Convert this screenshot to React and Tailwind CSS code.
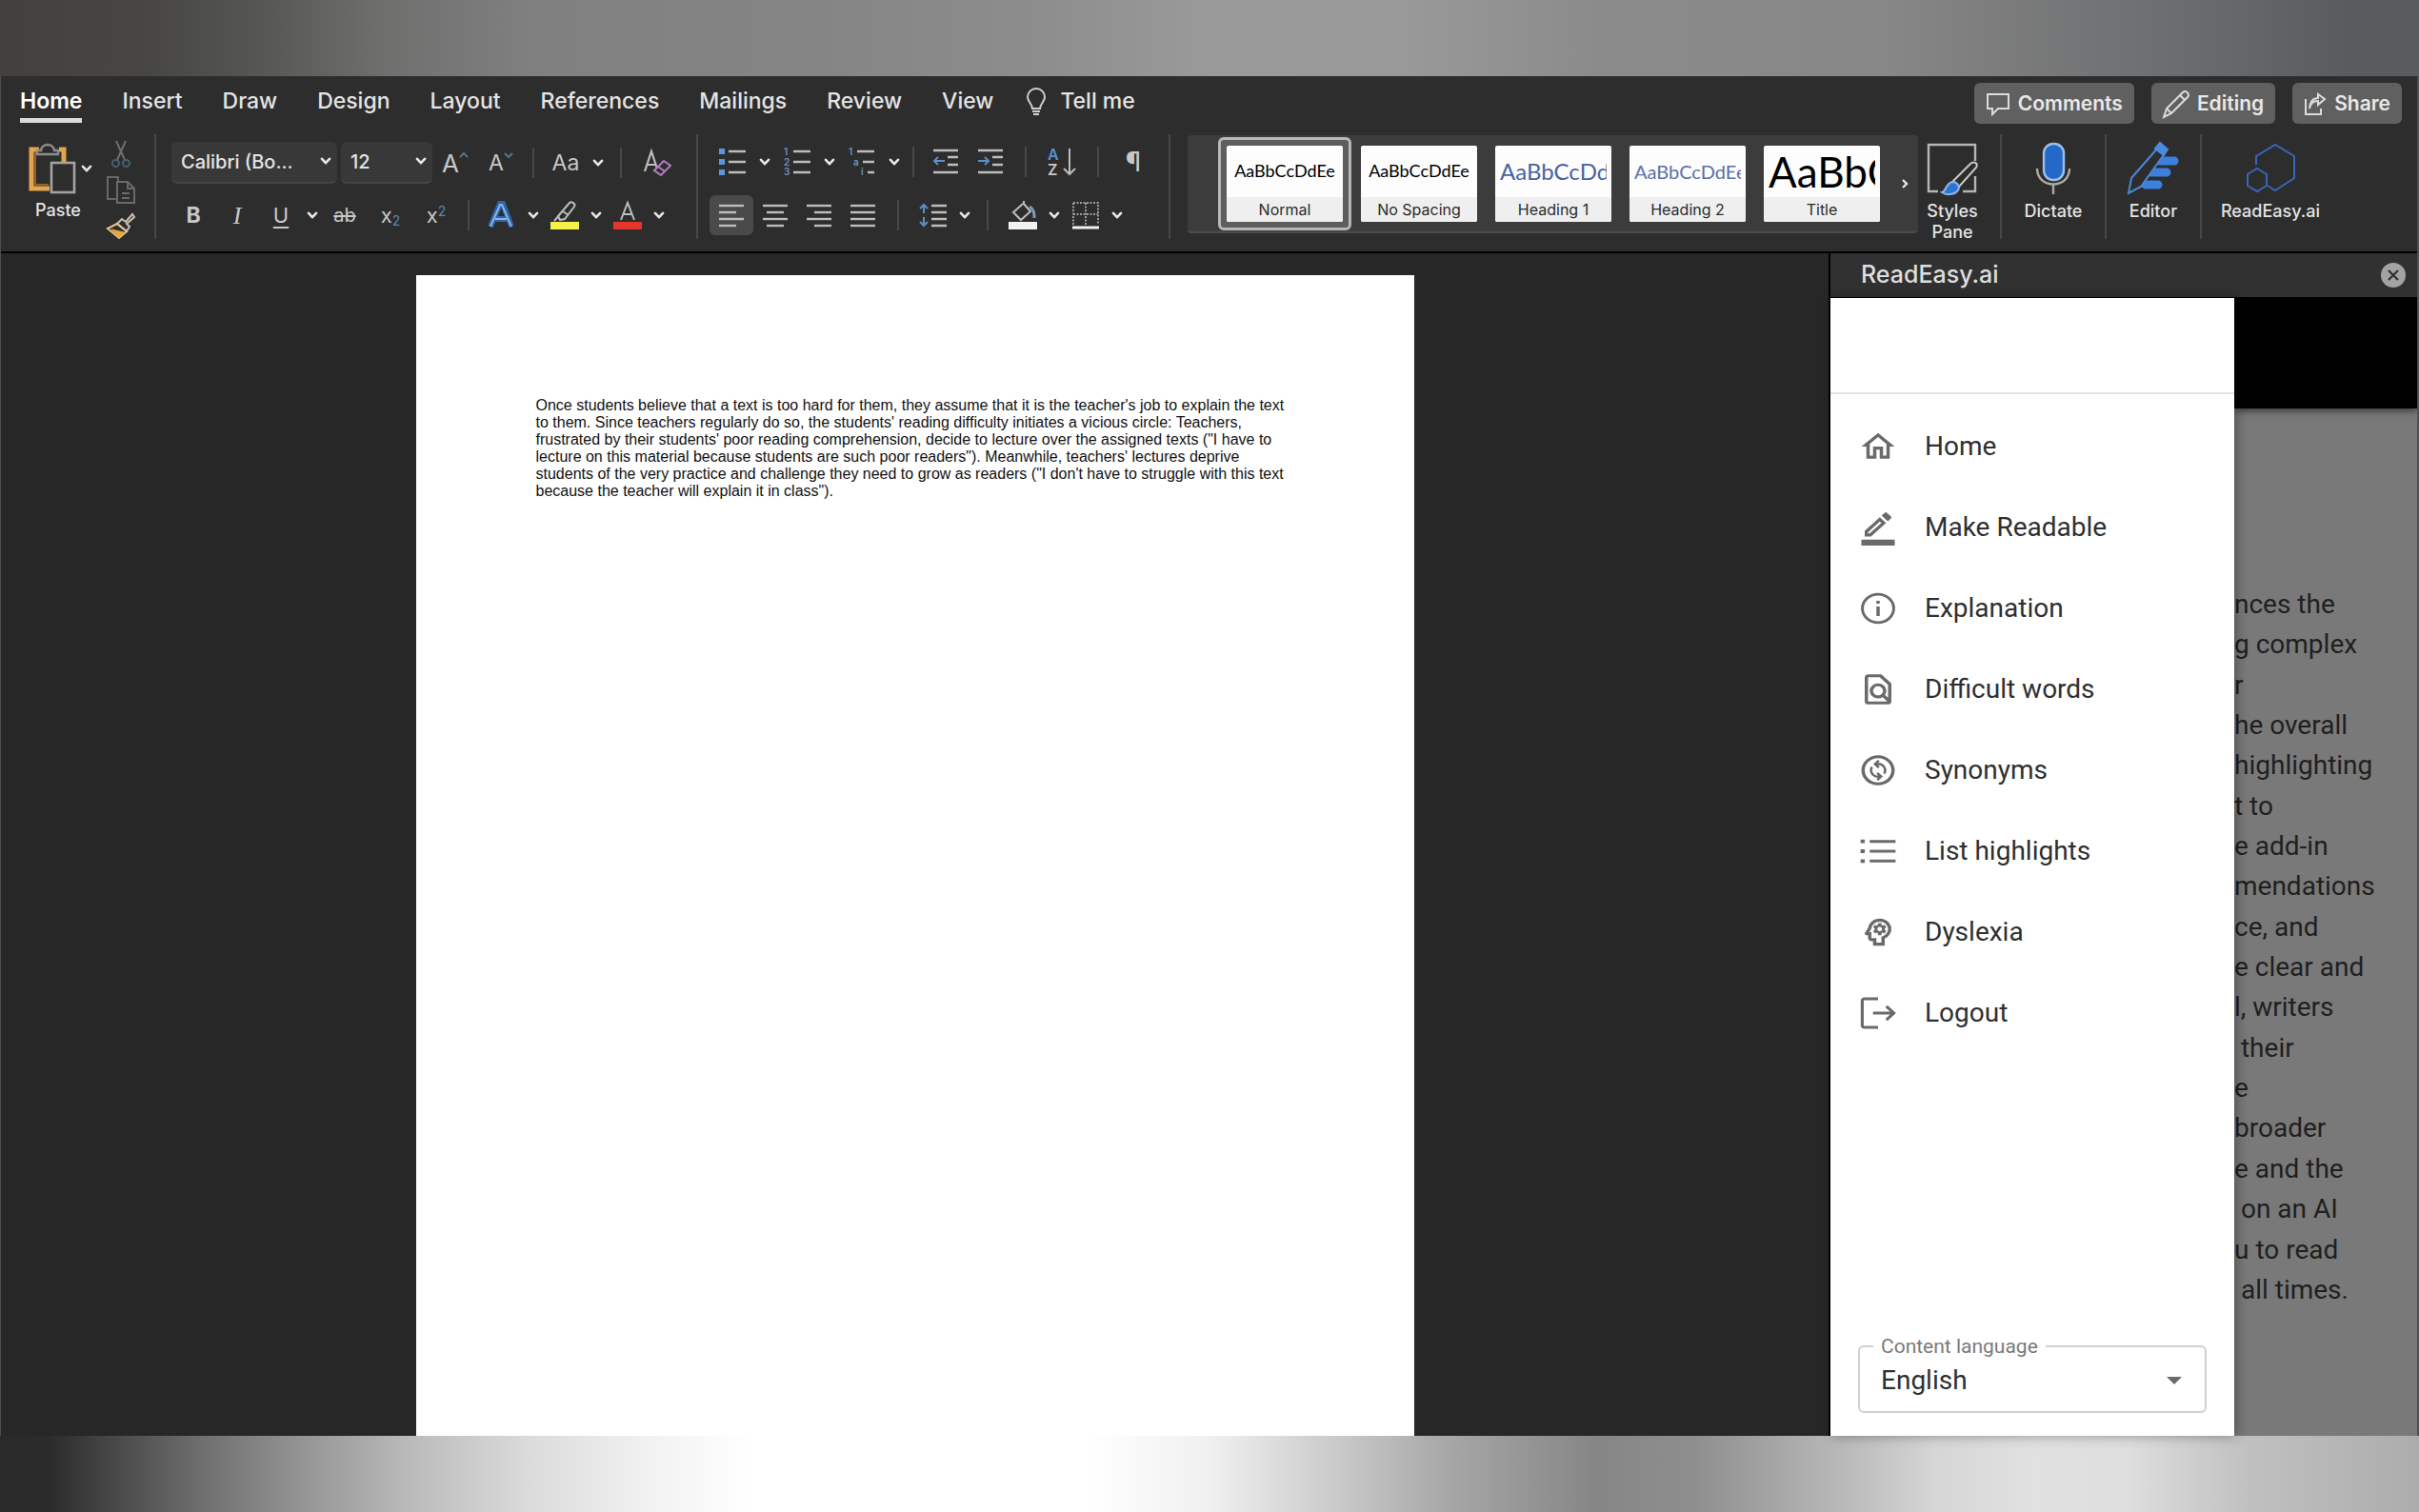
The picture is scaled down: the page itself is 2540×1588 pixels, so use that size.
import React from "react";
import {
  MdOutlineHome,
  MdOutlineFindInPage,
  MdOutlineChangeCircle,
  MdOutlineBorderColor,
  MdOutlinePsychology,
} from "react-icons/md";

const tabs = ["Home", "Insert", "Draw", "Design", "Layout", "References", "Mailings", "Review", "View"];

const styles = [
  { name: "Normal", sample: "AaBbCcDdEe", text: "text-[18px] text-black justify-center", selected: true },
  { name: "No Spacing", sample: "AaBbCcDdEe", text: "text-[18px] text-black justify-center" },
  { name: "Heading 1", sample: "AaBbCcDdEe", text: "text-[24px] text-[#4a62a3]" },
  { name: "Heading 2", sample: "AaBbCcDdEe", text: "text-[20px] text-[#5b70ab]" },
  { name: "Title", sample: "AaBbCc", text: "text-[44px] text-black" },
];

const aboutLines = [
  "nces the",
  "g complex",
  "r",
  "he overall",
  "highlighting",
  "t to",
  "e add-in",
  "mendations",
  "ce, and",
  "e clear and",
  "l, writers",
  " their",
  "e",
  "broader",
  "e and the",
  " on an AI",
  "u to read",
  " all times.",
];

const Chevron = () => (
  <svg className="w-3 h-2" viewBox="0 0 12 8" fill="none" stroke="#e6e6e6" strokeWidth="2.6" strokeLinecap="round" strokeLinejoin="round">
    <path d="M2 1.8 L6 6.2 L10 1.8" />
  </svg>
);

const Drop = ({ label }) => (
  <button aria-label={label} className="w-5 h-[42px] flex items-center justify-center shrink-0">
    <Chevron />
  </button>
);

const Sep = ({ wide }) => (
  <div className={wide ? "w-7 flex justify-center shrink-0" : "w-5 flex justify-center shrink-0"}>
    <div className="w-0.5 h-8 bg-[#484848]" />
  </div>
);

const GroupSep = () => <div className="w-0.5 h-[110px] bg-[#464646] shrink-0" />;

const Tool = ({ label, narrow, active, children }) => (
  <button
    aria-label={label}
    className={`${narrow ? "w-[46px]" : "w-12"} h-[42px] flex items-center justify-center shrink-0 rounded-md text-[#c8c8c8] ${active ? "bg-[#4a4a4a]" : ""}`}
  >
    {children}
  </button>
);

const Icon = ({ w = 30, h = 30, children }) => (
  <svg width={w} height={h} viewBox={`0 0 ${w} ${h}`} fill="none" stroke="#bdbdbd" strokeWidth="2" className="shrink-0 overflow-visible">
    {children}
  </svg>
);

const Lines = ({ rows }) => (
  <Icon w={28} h={26}>
    {rows.map(([a, b], i) => (
      <path key={i} d={`M${a} ${3 + i * 7} H${b}`} strokeWidth="2.4" />
    ))}
  </Icon>
);

const PasteGroup = () => (
  <div className="flex shrink-0">
    <div className="w-[108px] pt-2">
      <div className="flex items-center pl-7 gap-1">
        <button aria-label="Paste" className="flex">
          <Icon w={52} h={56}>
            <path d="M12 8 H4 V49 H23 M33 8 H38 V21" stroke="#e3a650" strokeWidth="5" />
            <path d="M8 11 V45 H22" stroke="#b9701f" strokeWidth="1.5" />
            <path d="M10 13 V9 H14 C15 1 27 1 28 9 H32 V13 Z" stroke="#8d8d8d" strokeWidth="2.4" fill="#2d2d2d" />
            <rect x="25" y="22" width="24" height="31" stroke="#a3a3a3" strokeWidth="2.6" fill="#2d2d2d" />
          </Icon>
        </button>
        <button aria-label="Paste options"><Chevron /></button>
      </div>
      <div className="pl-9 pt-1 text-[18px] leading-6 font-medium">Paste</div>
    </div>
    <div className="flex flex-col items-center gap-2 w-9 pt-1.5">
      <button aria-label="Cut">
        <Icon w={24} h={30}>
          <path d="M7 1 L16 21 M17 1 L8 21" stroke="#6e6e6e" />
          <circle cx="6.5" cy="24.5" r="3.5" stroke="#47606f" />
          <circle cx="17.5" cy="24.5" r="3.5" stroke="#47606f" />
        </Icon>
      </button>
      <button aria-label="Copy">
        <Icon w={32} h={30}>
          <path d="M11 24 H2 V1 H13 V5" stroke="#666" />
          <path d="M12 6 H23 L30 13 V28 H12 Z M23 6 V13 H30 M17 18 H25 M17 23 H25" stroke="#6a6a6a" />
        </Icon>
      </button>
      <button aria-label="Format painter">
        <Icon w={32} h={30}>
          <path d="M28 2 L21 10 L17 7 L12 12 L22 20 L25 15 L22 12 L30 5 Z" stroke="#c9c0ae" />
          <path d="M12 12 L2 17 L14 27 L22 20 Z" stroke="#e3c48d" />
          <path d="M6 18 L14 27 L19 21 Z" fill="#eba73e" stroke="#eba73e" strokeWidth="1" />
        </Icon>
      </button>
    </div>
  </div>
);

const FontSelect = ({ label, value, wide }) => (
  <div className={`relative shrink-0 ${wide ? "w-[174px]" : "w-24"}`}>
    <select
      aria-label={label}
      className="appearance-none w-full h-[44px] pl-2.5 rounded-md bg-[#383838] border-b-2 border-[#444] text-[20px] font-medium text-[#e4e4e4]"
    >
      <option>{value}</option>
    </select>
    <div className="absolute right-1.5 top-4 pointer-events-none"><Chevron /></div>
  </div>
);

const FontGroup = () => (
  <div className="flex flex-col gap-3 pl-4 pt-2 shrink-0">
    <div className="flex items-center h-[44px]">
      <div className="flex gap-1">
        <FontSelect label="Font" value="Calibri (Bo..." wide />
        <FontSelect label="Font size" value="12" />
      </div>
      <Tool label="Grow font">
        <span className="text-[26px]">A</span>
        <Icon w={10} h={24}><path d="M1 6 L5 2 L9 6" stroke="#55748c" /></Icon>
      </Tool>
      <Tool label="Shrink font">
        <span className="text-[23px]">A</span>
        <Icon w={10} h={24}><path d="M1 2 L5 6 L9 2" stroke="#55748c" /></Icon>
      </Tool>
      <Sep />
      <Tool label="Change case"><span className="text-[23px]">Aa</span></Tool>
      <Drop label="Case options" />
      <Sep wide />
      <Tool label="Clear formatting">
        <Icon w={30} h={30}>
          <path d="M2 24 L9 3 L16 24 M5 17 H13" strokeWidth="2.2" />
          <path d="M12 23 L22 13 L29 18 L19 28 Z M16 19 L23 24" stroke="#b77bc4" fill="#2d2d2d" />
        </Icon>
      </Tool>
    </div>
    <div className="flex items-center">
      <Tool label="Bold" narrow><span className="text-[23px] font-bold">B</span></Tool>
      <Tool label="Italic" narrow><span className="text-[26px] italic font-['Liberation_Serif',serif]">I</span></Tool>
      <Tool label="Underline" narrow><span className="text-[22px] underline underline-offset-4">U</span></Tool>
      <Drop label="Underline options" />
      <Tool label="Strikethrough"><span className="text-[20px] line-through">ab</span></Tool>
      <Tool label="Subscript"><span className="text-[22px]">x<sub className="text-[14px] text-[#5b87ab]">2</sub></span></Tool>
      <Tool label="Superscript"><span className="text-[22px]">x<sup className="text-[14px] text-[#5b87ab]">2</sup></span></Tool>
      <Sep />
      <Tool label="Text effects">
        <Icon w={30} h={30}>
          <path d="M4 27 L14 3 H17 L26 27 M9 19 H21" stroke="#2f64a8" strokeWidth="6" />
          <path d="M4 27 L14 4 H16 L26 27 M9 19 H21" stroke="#86b4e6" strokeWidth="2" />
        </Icon>
      </Tool>
      <Drop label="Text effect options" />
      <Tool label="Highlight" narrow>
        <Icon w={32} h={32}>
          <path d="M9 17 L21 3 C23 1 28 4 26 7 L16 20 L11 21 Z M5 22 L11 15 M14 12 L20 16" />
          <rect x="1" y="23" width="30" height="8" fill="#f7f04a" stroke="none" />
        </Icon>
      </Tool>
      <Drop label="Highlight options" />
      <Tool label="Font color" narrow>
        <Icon w={32} h={32}>
          <path d="M9 21 L16 3 L23 21 M12 15 H20" />
          <rect x="1" y="23" width="30" height="8" fill="#e5352b" stroke="none" />
        </Icon>
      </Tool>
      <Drop label="Font color options" />
    </div>
  </div>
);

const Marker = ({ x, y, children, size = 10 }) => (
  <text x={x} y={y} fontSize={size} fontWeight="600" fill="#6f93c4" stroke="none">{children}</text>
);

const ParagraphGroup = () => (
  <div className="flex flex-col gap-3.5 pl-3 pt-2 shrink-0">
    <div className="flex items-center h-[42px]">
      <Tool label="Bullets">
        <Icon w={30} h={30}>
          <path d="M11 4 H29 M11 15 H29 M11 26 H29" strokeWidth="2.4" />
          <path d="M1 4 H7 M1 15 H7 M1 26 H7" stroke="#5c96da" strokeWidth="6" />
        </Icon>
      </Tool>
      <Drop label="Bullet options" />
      <Tool label="Numbering">
        <Icon w={30} h={30}>
          <path d="M11 4 H29 M11 15 H29 M11 26 H29" strokeWidth="2.4" />
          <Marker x={1} y={8}>1</Marker>
          <Marker x={1} y={19}>2</Marker>
          <Marker x={1} y={29}>3</Marker>
        </Icon>
      </Tool>
      <Drop label="Numbering options" />
      <Tool label="Multilevel list">
        <Icon w={30} h={30}>
          <path d="M10 4 H28 M16 15 H28 M21 26 H28" strokeWidth="2.4" />
          <Marker x={1} y={8}>1</Marker>
          <Marker x={6} y={19}>a</Marker>
          <Marker x={14} y={29}>i</Marker>
        </Icon>
      </Tool>
      <Drop label="Multilevel options" />
      <Sep />
      <Tool label="Decrease indent">
        <Icon w={28} h={30}>
          <path d="M1 3 H27 M16 10 H27 M16 18 H27 M1 26 H27" strokeWidth="2.4" />
          <path d="M13 14 H2 M6 10 L2 14 L6 18" stroke="#5b8fc7" />
        </Icon>
      </Tool>
      <Tool label="Increase indent" narrow>
        <Icon w={28} h={30}>
          <path d="M1 3 H27 M16 10 H27 M16 18 H27 M1 26 H27" strokeWidth="2.4" />
          <path d="M1 14 H12 M8 10 L12 14 L8 18" stroke="#5b8fc7" />
        </Icon>
      </Tool>
      <Sep wide />
      <Tool label="Sort">
        <Icon w={30} h={32}>
          <text x="0" y="14" fontSize="16" fontWeight="600" fill="#5b8fc7" stroke="none">A</text>
          <text x="0" y="30" fontSize="16" fontWeight="600" fill="#c8c8c8" stroke="none">Z</text>
          <path d="M23 2 V29 M17 23 L23 29 L29 23" />
        </Icon>
      </Tool>
      <Sep wide />
      <Tool label="Show formatting marks" narrow><span className="text-[28px]">¶</span></Tool>
    </div>
    <div className="flex items-center">
      <Tool label="Align left" narrow active><Lines rows={[[1, 27], [1, 19], [1, 27], [1, 19]]} /></Tool>
      <Tool label="Center" narrow><Lines rows={[[1, 27], [5, 23], [1, 27], [5, 23]]} /></Tool>
      <Tool label="Align right" narrow><Lines rows={[[1, 27], [9, 27], [1, 27], [9, 27]]} /></Tool>
      <Tool label="Justify" narrow><Lines rows={[[1, 27], [1, 27], [1, 27], [1, 27]]} /></Tool>
      <Sep wide />
      <Tool label="Line spacing" narrow>
        <Icon w={30} h={26}>
          <path d="M13 3 H29 M13 10 H29 M13 17 H29 M13 24 H29" strokeWidth="2.4" />
          <path d="M5 2 V11 M1 6 L5 2 L9 6 M5 15 V24 M1 20 L5 24 L9 20" stroke="#5b8fc7" />
        </Icon>
      </Tool>
      <Drop label="Line spacing options" />
      <Sep wide />
      <Tool label="Shading" narrow>
        <Icon w={32} h={32}>
          <path d="M16 4 L6 13 L14 21 L24 12 L17 4 V1" />
          <path d="M23 7 C28 10 28 14 28 19" stroke="#7d9bb5" strokeWidth="3" />
          <rect x="1" y="23" width="30" height="8" fill="#f2f2f2" stroke="none" />
        </Icon>
      </Tool>
      <Drop label="Shading options" />
      <Tool label="Borders" narrow>
        <Icon w={30} h={30}>
          <path d="M2 2 H28 V25 M2 2 V25 M15 2 V25 M2 14 H28" strokeDasharray="2 1.5" stroke="#9c9c9c" />
          <path d="M1 28 H29" stroke="#f2f2f2" strokeWidth="3" />
        </Icon>
      </Tool>
      <Drop label="Border options" />
    </div>
  </div>
);

const StyleCard = ({ name, sample, text, selected }) => (
  <button
    className={`shrink-0 rounded-md p-1.5 border-[3px] ${selected ? "border-[#b8b8b8] bg-[#5e5e5e]" : "border-transparent"}`}
  >
    <div className="w-[122px] h-[80px] rounded-xs bg-[#fdfdfd] flex flex-col overflow-hidden">
      <div className={`h-[54px] px-[5px] flex items-center whitespace-nowrap font-[Lato,sans-serif] ${text}`}>
        <div className="overflow-hidden">{sample}</div>
      </div>
      <div className="flex-1 bg-[#efefef] text-[#2b2b2b] text-[16px] leading-[26px]">{name}</div>
    </div>
  </button>
);

const BigTool = ({ label, width, children }) => (
  <button className={`${width} shrink-0 flex flex-col items-center pt-2 text-[18px] leading-[22px] font-medium`}>
    {children}
    <span className="mt-1.5">{label}</span>
  </button>
);

const TopButton = ({ label, children }) => (
  <button className="h-[43px] px-3 rounded-md bg-[#606060] flex items-center gap-2 text-[21px] font-semibold text-[#e8e8e8]">
    {children}
    {label}
  </button>
);

const Ribbon = () => (
  <header className="bg-[#2d2d2d] border-b-2 border-black text-[#e4e4e4]">
    <div className="flex items-start justify-between h-[58px]">
      <nav className="flex pl-5 pt-3 gap-[42px] text-[23px] leading-7 font-medium">
        {tabs.map((tab) => (
          <a
            key={tab}
            href="#"
            className={tab === "Home" ? "font-semibold text-white border-b-[5px] border-[#dcdcdc] pb-1" : ""}
          >
            {tab}
          </a>
        ))}
        <a href="#" className="flex gap-3.5 -ml-2 h-7 whitespace-nowrap">
          <Icon w={22} h={30}>
            <path d="M7 22 C7 17 2 15 2 10 C2 5 6 1 11 1 C16 1 20 5 20 10 C20 15 15 17 15 22 Z M7 25 H15 M8 28 H14" stroke="#d0d0d0" />
          </Icon>
          Tell me
        </a>
      </nav>
      <div className="flex gap-[18px] pt-[7px] pr-4">
        <TopButton label="Comments">
          <Icon w={26} h={26}><path d="M2 3 H24 V18 H13 L7 24 V18 H2 Z" stroke="#dcdcdc" /></Icon>
        </TopButton>
        <TopButton label="Editing">
          <Icon w={28} h={30}>
            <path d="M1 29 L4 20 L21 3 C24 0 29 5 26 8 L9 25 Z M4 20 L9 25 M18 6 L23 11" stroke="#dcdcdc" />
          </Icon>
        </TopButton>
        <TopButton label="Share">
          <Icon w={24} h={26}>
            <path d="M2 8 V24 H18 V18 M6 18 C7 12 10 10 15 10 V14 L22 8 L15 3 V7 C9 7 6 12 6 18 Z" stroke="#dcdcdc" />
          </Icon>
        </TopButton>
      </div>
    </div>

    <div className="flex h-[126px] pt-[3px]">
      <div className="flex w-[161px] shrink-0"><PasteGroup /></div>
      <GroupSep />
      <div className="w-[567px] shrink-0"><FontGroup /></div>
      <GroupSep />
      <div className="w-[494px] shrink-0"><ParagraphGroup /></div>
      <GroupSep />
      <div className="ml-[18px] mt-px h-[103px] flex-1 min-w-0 flex items-center bg-[#3c3c3c] border-b-2 border-[#4c4c4c] rounded-sm">
        <div className="flex flex-1 min-w-0 gap-px pl-8 overflow-hidden">
          {styles.map((s) => (
            <StyleCard key={s.name} {...s} />
          ))}
        </div>
        <button aria-label="More styles" className="w-7 flex justify-center shrink-0">
          <Icon w={8} h={12}><path d="M2 2 L6 6 L2 10" stroke="#e6e6e6" strokeWidth="2.4" /></Icon>
        </button>
      </div>
      <BigTool width="w-[72px]" label={<>Styles<br />Pane</>}>
        <Icon w={54} h={56}>
          <path d="M12 52 H2 V3 H51 V20 M51 36 V52 H38" stroke="#b5b5b5" strokeWidth="2.4" />
          <path d="M26 43 L46 23 C49 20 55 22 52 27 L34 47 Z" stroke="#c9c9c9" fill="#2d2d2d" />
          <path d="M16 53 C21 52 20 42 28 42 C33 43 36 48 32 52 C28 56 20 56 16 53 Z" fill="#2f74d0" stroke="#8bb7e8" />
        </Icon>
      </BigTool>
      <div className="ml-3.5"><GroupSep /></div>
      <BigTool width="w-[108px]" label="Dictate">
        <Icon w={40} h={56}>
          <path d="M3 28 C3 50 37 50 37 28 M20 45 V55" stroke="#b0aba4" strokeWidth="2.4" />
          <rect x="10" y="2" width="21" height="38" rx="10" fill="#2468c8" stroke="#9cc0ea" strokeWidth="2.4" />
        </Icon>
      </BigTool>
      <GroupSep />
      <BigTool width="w-[98px]" label="Editor">
        <Icon w={56} h={56}>
          <path d="M34 20 H50 M26 32 H42 M20 45 H33" stroke="#3c7fdc" strokeWidth="9" strokeLinecap="round" />
          <path d="M2 54 L5 38 L33 6 L40 12 L15 47 Z" stroke="#4a87d8" strokeWidth="2" fill="#2d2d2d" />
          <path d="M30 7 L35 1 L43 8 L39 14 Z" fill="#4a8be0" stroke="#4a8be0" />
        </Icon>
      </BigTool>
      <GroupSep />
      <BigTool width="w-36" label="ReadEasy.ai">
        <Icon w={54} h={56}>
          <path d="M12 24 V15 L32 3 L52 15 V38 L32 51 L24 46" stroke="#3866b8" />
          <path d="M13 28 L23 34 V46 L13 52 L3 46 V34 Z" stroke="#3866b8" />
        </Icon>
      </BigTool>
      <div className="w-[82px] shrink-0" />
    </div>
  </header>
);

const ListIcon = (props) => (
  <svg {...props} viewBox="0 0 24 24" fill="none" stroke="currentColor" strokeWidth="1.8">
    <path d="M7 5.5 H22.5 M7 12 H22.5 M7 18.5 H22.5" />
    <path d="M1.5 5.5 H4 M1.5 12 H4 M1.5 18.5 H4" strokeWidth="2.4" />
  </svg>
);

const InfoIcon = (props) => (
  <svg {...props} viewBox="0 0 24 24" fill="none" stroke="currentColor" strokeWidth="1.7">
    <circle cx="12" cy="12" r="9.4" />
    <path d="M12 7 V8.8 M12 10.8 V17" strokeWidth="2" />
  </svg>
);

const LogoutIcon = (props) => (
  <svg {...props} viewBox="0 0 24 24" fill="none" stroke="currentColor" strokeWidth="1.8">
    <path d="M12 2.5 H4 C3 2.5 2.5 3 2.5 4 V20 C2.5 21 3 21.5 4 21.5 H12 M9 12 H21.5 M17 7.5 L21.5 12 L17 16.5" />
  </svg>
);

const menu = [
  { label: "Home", icon: MdOutlineHome },
  { label: "Make Readable", icon: MdOutlineBorderColor },
  { label: "Explanation", icon: InfoIcon },
  { label: "Difficult words", icon: MdOutlineFindInPage },
  { label: "Synonyms", icon: MdOutlineChangeCircle },
  { label: "List highlights", icon: ListIcon },
  { label: "Dyslexia", icon: MdOutlinePsychology },
  { label: "Logout", icon: LogoutIcon },
];

const TaskPane = () => (
  <aside className="w-[618px] shrink-0 flex flex-col border-l-2 border-black">
    <div className="h-[47px] bg-[#313131] border-b border-black flex items-center justify-between pl-8 pr-3">
      <h2 className="text-[25px] font-medium text-[#dedede]">ReadEasy.ai</h2>
      <button aria-label="Close pane" className="w-[26px] h-[26px] rounded-full bg-[#a3a3a3] flex items-center justify-center">
        <svg className="w-3 h-3" viewBox="0 0 12 12" stroke="#303030" strokeWidth="2.2">
          <path d="M1 1 L11 11 M11 1 L1 11" />
        </svg>
      </button>
    </div>

    <div className="flex-1 flex font-[Roboto,sans-serif] text-[28px]">
      <div className="relative z-10 w-[424px] shrink-0 bg-white flex flex-col shadow-[2px_0_12px_rgba(0,0,0,0.35)]">
        <div className="h-[101px] border-b-2 border-[#e3e3e3]" />
        <ul className="pt-3">
          {menu.map(({ label, icon: MenuIcon }) => (
            <li key={label}>
              <a href="#" className="flex items-center h-[85px] pl-[29px] gap-7 text-[#2f2f2f]">
                <MenuIcon className="w-[42px] h-[38px] text-[#6a6a6a]" preserveAspectRatio="none" />
                {label}
              </a>
            </li>
          ))}
        </ul>
        <fieldset className="mt-auto mx-[29px] mb-6 h-[84px] rounded-md border-2 border-[#d0d0d0] relative">
          <legend className="ml-3.5 px-2 text-[21px] leading-7 text-[#7a7a7a]">
            <label htmlFor="language">Content language</label>
          </legend>
          <select id="language" className="appearance-none w-full h-11 pl-[22px] text-[#2f2f2f]">
            <option>English</option>
          </select>
          <svg className="absolute right-6 top-[18px] w-4 h-2 pointer-events-none" viewBox="0 0 16 8" fill="#6a6a6a">
            <path d="M0 0 H16 L8 8 Z" />
          </svg>
        </fieldset>
      </div>

      <div className="flex-1 min-w-0 bg-[#797979] flex flex-col overflow-hidden">
        <div className="h-[116px] bg-black shadow-[0_2px_8px_rgba(0,0,0,0.6)]" />
        <div className="flex-1 flex flex-col justify-between pt-[185px] pb-[132px] text-[#1f1f1f]">
          {aboutLines.map((line) => (
            <p key={line} className="leading-[42px] whitespace-pre">{line}</p>
          ))}
        </div>
      </div>
    </div>
  </aside>
);

const Page = () => (
  <main className="flex-1 min-w-0 bg-[#272727] flex justify-center pt-[23px]">
    <article className="w-[1048px] bg-white px-[126px] pt-32 font-['Liberation_Sans',Arial,sans-serif] text-[16px] leading-[18px] text-[#111]">
      <p className="whitespace-nowrap">
        Once students believe that a text is too hard for them, they assume that it is the teacher's job to explain the text<br />
        to them. Since teachers regularly do so, the students' reading difficulty initiates a vicious circle: Teachers,<br />
        frustrated by their students' poor reading comprehension, decide to lecture over the assigned texts ("I have to<br />
        lecture on this material because students are such poor readers"). Meanwhile, teachers' lectures deprive<br />
        students of the very practice and challenge they need to grow as readers ("I don't have to struggle with this text<br />
        because the teacher will explain it in class").
      </p>
    </article>
  </main>
);

const App = () => {
  return (
    <div className="min-h-screen flex flex-col font-[Inter,sans-serif]">
      <div className="h-20 bg-[linear-gradient(90deg,#43413e_0%,#474644_6%,#535351_10%,#6f6f6e_16%,#808080_22%,#858585_34%,#8d8d8d_43%,#9a9a9a_50%,#999999_58%,#8b8b8b_66%,#878787_78%,#747576_86%,#666869_92%,#5a5b5c_97%)]" />
      <div className="flex-1 flex flex-col border-l border-r-2 border-[#4f4f4f]">
        <Ribbon />
        <div className="flex-1 flex">
          <Page />
          <TaskPane />
        </div>
      </div>
      <div className="h-20 bg-[linear-gradient(90deg,#2a2a2a_0%,#2b2b2b_2%,#4b4b4b_5%,#6b6b6b_8%,#909090_12%,#bbbbbb_17%,#dcdcdc_22%,#f2f2f2_27%,#ffffff_31%,#ffffff_45%,#f0f0f0_50%,#cccccc_55%,#a6a6a6_60%,#868686_66%,#8e8e8e_70%,#b8b8b8_76%,#d6d6d6_80%,#e1e1e1_84%,#dedede_88%,#c0c0c0_93%,#acacac_100%)]" />
    </div>
  );
};

export default App;
